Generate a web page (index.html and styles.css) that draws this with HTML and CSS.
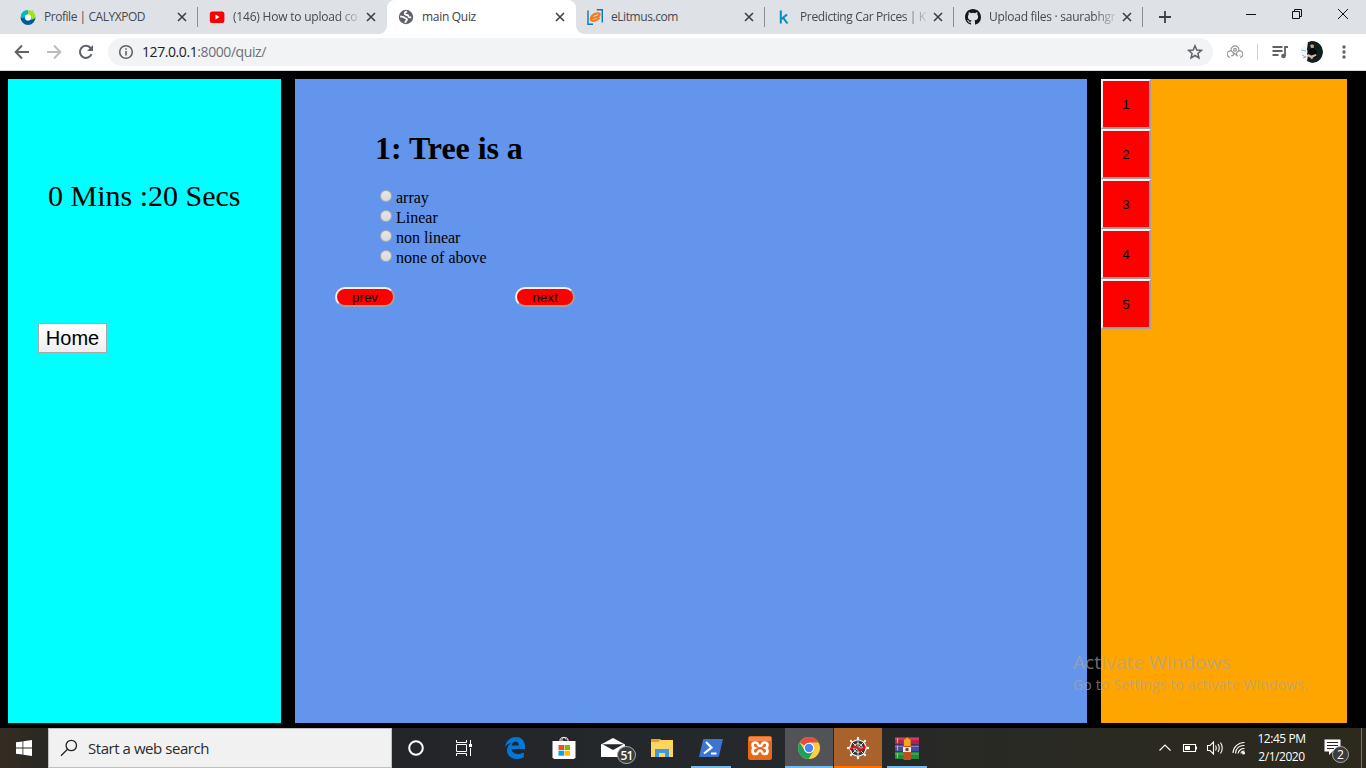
FILE: index.html
```html
<!DOCTYPE html>
<html lang="en">
<head>
<meta charset="utf-8">
<title>main Quiz</title>
<link rel="stylesheet" href="styles.css">
</head>
<body>
<div class="screen">
  <header class="tabstrip">
    <div class="tab">
      <svg class="favicon" viewBox="0 0 16 16"><path d="M1.200 5A7.700 7.700 0 0 1 8 .9v4.600A3 3 0 0 0 5 8.500H.5z" fill="#00b9c8"/><path d="M.5 8.500H5a3 3 0 0 0 6 0h4.500A7.500 7.500 0 0 1 .5 8.500z" fill="#005b9b"/><path d="M8 1.200c1.500-.2 3 0 4.200.8L14 .8l-.6 2.400c1.700 1.500 2.400 3.300 2.100 5.800L11 11A4 4 0 0 0 8 5.500z" fill="#9be51c"/><circle cx="8" cy="8.500" r="3" fill="#fff"/></svg>
      <span class="title t1">Profile | CALYXPOD</span>
      <svg class="close" viewBox="0 0 10 10"><path d="M1 1l8 8M9 1l-8 8"/></svg>
    </div>
    <div class="tab beside-active">
      <svg class="favicon" viewBox="0 0 16 16"><rect x=".8" y="2.500" width="14.600" height="11.500" rx="2.500" fill="#f00"/><path d="M6.500 5.500v5l4-2.500z" fill="#fff"/></svg>
      <span class="title fade t2">(146) How to upload co</span>
      <svg class="close" viewBox="0 0 10 10"><path d="M1 1l8 8M9 1l-8 8"/></svg>
    </div>
    <div class="tab active">
      <svg class="favicon" viewBox="0 0 16 16"><circle cx="8" cy="8" r="7.200" fill="#5f6368"/><path d="M9 2.300C7 3 6.300 4 7 5.200c1 1.300 3 .3 3.500 1.800M2.200 7.500c2 .2 3.500 0 4.300 1.300.8 1 2.500.2 2.500 1.700 0 1.200-1.500 1.200-1.700 3.300M10.500 7c-.3 1 .8 1.500 2.700 1.300" fill="none" stroke="#fff" stroke-width="1.800"/></svg>
      <span class="title t3">main Quiz</span>
      <svg class="close" viewBox="0 0 10 10"><path d="M1 1l8 8M9 1l-8 8"/></svg>
    </div>
    <div class="tab">
      <svg class="favicon" viewBox="0 0 16 16"><path d="M1 1.500v13.700h5M9.800.8h5.500v12.700" fill="none" stroke="#0b76bd" stroke-width="1.400"/><path d="M4.500 8.900C8 9.200 12.500 7.500 12.700 5.600 12.800 3.600 8 4 5.500 6.500 2.500 9.500 3.500 12 6.500 11.800c2.500-.2 4.500-1.300 6-2.800" fill="none" stroke="#f47a20" stroke-width="2.200"/></svg>
      <span class="title t4">eLitmus.com</span>
      <svg class="close" viewBox="0 0 10 10"><path d="M1 1l8 8M9 1l-8 8"/></svg>
    </div>
    <div class="tab">
      <svg class="favicon" viewBox="0 0 16 16"><path d="M4.800 1.500v13M11 5.500 5.500 10M7 8.700l4.500 5.800" fill="none" stroke="#008fc3" stroke-width="2"/></svg>
      <span class="title fade t5">Predicting Car Prices | K</span>
      <svg class="close" viewBox="0 0 10 10"><path d="M1 1l8 8M9 1l-8 8"/></svg>
    </div>
    <div class="tab">
      <svg class="favicon" viewBox="0 0 16 16"><path fill="#191717" d="M8 0C3.580 0 0 3.580 0 8c0 3.540 2.290 6.530 5.470 7.590.4.070.55-.17.55-.38 0-.19-.01-.82-.01-1.490-2.010.37-2.530-.49-2.690-.94-.09-.23-.48-.94-.82-1.130-.28-.15-.68-.52-.01-.53.63-.01 1.080.58 1.230.82.72 1.210 1.870.87 2.330.66.07-.52.28-.87.51-1.070-1.780-.2-3.640-.89-3.640-3.950 0-.87.31-1.590.82-2.150-.08-.2-.36-1.020.08-2.120 0 0 .67-.21 2.200.82a7.600 7.600 0 0 1 4 0c1.530-1.040 2.200-.82 2.200-.82.44 1.100.16 1.920.08 2.120.51.56.82 1.270.82 2.150 0 3.070-1.870 3.750-3.650 3.950.29.25.54.73.54 1.480 0 1.070-.01 1.930-.01 2.200 0 .21.15.46.55.38A8 8 0 0 0 16 8c0-4.420-3.580-8-8-8z"/></svg>
      <span class="title fade t6">Upload files · saurabhgr</span>
      <svg class="close" viewBox="0 0 10 10"><path d="M1 1l8 8M9 1l-8 8"/></svg>
    </div>
    <svg class="newtab" viewBox="0 0 12 12"><path d="M6 0v12M0 6h12"/></svg>
    <div class="window-buttons">
      <svg viewBox="0 0 12 12"><path d="M1 6.500h10"/></svg>
      <svg viewBox="0 0 12 12"><path d="M1.500 3.500h7v7h-7zM3.500 3.500v-2h7v7h-2"/></svg>
      <svg viewBox="0 0 12 12"><path d="M1 1l10 10M11 1 1 11"/></svg>
    </div>
  </header>

  <nav class="toolbar">
    <svg class="nav-icon" viewBox="0 0 16 16"><path d="M15 8H2M8 1.500 1.700 8 8 14.500"/></svg>
    <svg class="nav-icon disabled" viewBox="0 0 16 16"><path d="M1 8h13M8 1.500 14.300 8 8 14.500"/></svg>
    <svg class="nav-icon" viewBox="0 0 16 16"><path d="M13.500 10.200A6 6 0 1 1 12.300 3.700L14 5.400"/><path d="M15 1v6H9z" fill="#5f6368" stroke="none"/></svg>
    <div class="address">
      <svg class="info" viewBox="0 0 16 16"><circle cx="8" cy="8" r="6.300"/><path d="M8 7v4.500M8 4.200v1.600"/></svg>
      <span class="url"><b>127.0.0.1</b>:8000/quiz/</span>
      <svg class="star" viewBox="0 0 16 16"><path d="M8 1.800 9.800 6l4.600.4-3.500 3 1.050 4.500L8 11.500l-3.950 2.400 1.050-4.500-3.500-3L6.200 6z"/></svg>
    </div>
    <svg class="extension" viewBox="0 0 16 16"><path d="M4.300 7.200A3.900 3.900 0 1 1 11.800 6.500M3 13.300A3.200 3.200 0 1 1 6.500 10.500q-.5 1.800-2.500 1M5.500 8l5.500 4.300M13 13.300A3.200 3.200 0 1 0 9.500 10.500M12.500 11.200h.8"/><circle cx="8" cy="5.800" r="1.400"/></svg>
    <span class="rule"></span>
    <svg class="media" viewBox="0 0 16 16"><path d="M.5 3h10M.5 7h10M.5 11h6M13 12V3h3"/><circle cx="11.500" cy="12" r="2.300" fill="#5f6368" stroke="none"/></svg>
    <svg class="avatar" viewBox="0 0 22 22"><circle cx="11" cy="11" r="11" fill="#f2f7fa"/><path d="M7 1C16-3 22 4 22 11S17 22 11 22L6 20l1-6-1-6z" fill="#11201f"/><path d="M0 9l5 1M1 14l4 2M2 17l3-1" stroke="#8db1c9"/><path d="M9 4q2-3 4 0l-.5 4h-2z" fill="#c99e85"/><path d="M8.500 4q2.500-4 5 0l-2.500-.7z" fill="#050505"/><path d="M8 9l2.500-2h2L16 10v6l-7 1-3-4z" fill="#08090c"/><path d="M7 13l3.500 1.500L15 13l.5 1.500-3.500 2-1 2-2-2-2-1z" fill="#dbb8a5"/></svg>
    <svg class="menu" viewBox="0 0 16 16"><circle cx="8" cy="3" r="1.700"/><circle cx="8" cy="8" r="1.700"/><circle cx="8" cy="13" r="1.700"/></svg>
  </nav>

  <main class="quiz">
    <section class="side">
      <div class="timer">0 Mins :20 Secs</div>
      <button class="home">Home</button>
    </section>
    <section class="question">
      <h1>1: Tree is a</h1>
      <ul class="options">
        <li><i class="radio"></i>array</li>
        <li><i class="radio"></i>Linear</li>
        <li><i class="radio"></i>non linear</li>
        <li><i class="radio"></i>none of above</li>
      </ul>
      <div class="pager"><button>prev</button><button>next</button></div>
    </section>
    <section class="numbers">
      <button>1</button><button>2</button><button>3</button><button>4</button><button>5</button>
    </section>
    <div class="watermark"><p class="wm-title">Activate Windows</p><p class="wm-text">Go to Settings to activate Windows.</p></div>
  </main>

  <footer class="taskbar">
    <div class="cell"><svg width="16" height="16" viewBox="0 0 16 16"><path fill="#fff" d="M0 2.300 6.500 1.400v6.200H0zM7.300 1.200 16 0v7.600H7.300zM0 8.400h6.500v6.200L0 13.700zM7.300 8.400H16V16l-8.700-1.200z"/></svg></div>
    <div class="search"><svg width="18" height="18" viewBox="0 0 18 18"><circle cx="11.300" cy="6.500" r="5.200"/><path d="M7.500 10.200 1 16.800"/></svg><span>Start a web search</span></div>
    <div class="cell"><svg width="16" height="16" viewBox="0 0 16 16"><circle cx="8" cy="8" r="6.800" fill="none" stroke="#fff" stroke-width="2"/></svg></div>
    <div class="cell views"><svg width="18" height="16" viewBox="0 0 18 16"><path d="M1.500 0v2.500h10V0M1.500 4.500h10v7h-10zM1.500 16v-2.500h10V16M15.500 0v4M15.500 8v8" fill="none" stroke="#fff"/><rect x="14" y="4" width="3" height="3" fill="#fff"/></svg></div>
    <div class="apps">
      <div class="cell"><svg width="22" height="22" viewBox="0 0 22 22"><path fill="#0078d7" d="M1 10C2 3.500 6.500 0 12 0c6 0 9 4.500 9 9.500V12H7.500c.2 3.500 3.500 5 6.700 5 2.300 0 4.200-.7 5.600-1.500v4.800C18 21.400 15.500 22 13 22 7 22 3 18.500 3 13.500c0-3.500 2-6.300 5-7.700C4.500 6 2.500 8 1 10zM7.600 8.500h7.300C14.900 6 13.500 4.600 11.500 4.600S8 6.500 7.600 8.500z"/></svg></div>
      <div class="cell"><svg width="24" height="24" viewBox="0 0 24 24"><path d="M8 6V4c0-3.500 8-3.500 8 0v2M10 6V3.500C10 1 14 1 14 3.500" fill="none" stroke="#fff"/><path d="M.5 5h23v16.500L22 23H2L.5 21.500z" fill="#fff"/><path fill="#f25022" d="M6.500 9H12v5H6.500z"/><path fill="#7fba00" d="M12.500 9H18v5h-5.500z"/><path fill="#00a4ef" d="M6.500 14.700H12v5H6.500z"/><path fill="#ffb900" d="M12.500 14.700H18v5h-5.500z"/></svg></div>
      <div class="cell mail"><svg width="24" height="20" viewBox="0 0 24 20"><path d="M0 6.500 12 0l12 6.500V19H0z" fill="#fff"/><path d="M1.500 6.300h21L12 12z" fill="#25282b"/></svg><span class="badge">51</span></div>
      <div class="cell"><svg width="22" height="18" viewBox="0 0 22 18"><path d="M0 0h9l1 1h12v17H0z" fill="#ffd45f"/><path d="M0 0h9l-1 3H0z" fill="#e8a21a"/><path d="M4 18v-8h14v8h-4v-4H8v4z" fill="#3b9be0"/></svg></div>
      <div class="cell run"><svg width="24" height="18" viewBox="0 0 24 18"><path d="M4.500 0H23c1 0 1 0 .8 1L20 17c-.2 1-1 1-1 1H1c-1 0-1 0-.8-1L4 1z" fill="#3c74d0"/><path d="M7 3l5.500 5.700L5 14.500M12 14.500h5.500" fill="none" stroke="#fff" stroke-width="2.200"/></svg></div>
      <div class="cell"><svg width="24" height="24" viewBox="0 0 24 24"><rect width="24" height="24" rx="2.500" fill="#e96816"/><path d="M1 1h22v4H1z" fill="#f08b52"/><path d="M7.500 6.500c3.500 0 1.500 3.500 4.500 3.500s1-3.500 4.500-3.500c4 0 3.500 4.500 1.200 5.500 2.300 1 2.800 6-1.200 6-3.500 0-1.500-3.500-4.500-3.500s-1 3.500-4.500 3.500c-4 0-3.500-5-1.200-6C4 11 3.500 6.500 7.500 6.500z" fill="none" stroke="#fff" stroke-width="2.700"/></svg></div>
      <div class="cell current"><svg width="22" height="22" viewBox="0 0 22 22"><circle cx="11" cy="11" r="11" fill="#ffcd40"/><path d="M11 11 1.500 5.500A11 11 0 0 1 20.500 5.500H11z" fill="#dd4f40"/><path d="M1.500 5.500A11 11 0 0 0 10.500 22L15.800 13.500 11 15 6.500 13z" fill="#1ba261"/><circle cx="11" cy="11" r="5.300" fill="#fff"/><circle cx="11" cy="11" r="4.200" fill="#4587f3"/></svg></div>
      <div class="cell alert"><svg width="24" height="24" viewBox="0 0 24 24"><path d="M12 3.500 18 6l2.500 6L18 18l-6 2.500L6 18l-2.500-6L6 6z" fill="#2f3638" stroke="#eee" stroke-width="1.300"/><path d="M12 1v22M1 12h22M4.500 4.500l15 15M19.500 4.500l-15 15" fill="none" stroke="#eee" stroke-width=".9"/><path d="M12 7.500l3.300 1.300 1.300 3.200-1.300 3.300-3.300 1.200-3.300-1.200L7.500 12l1.200-3.200z" fill="none" stroke="#eee" stroke-width=".8"/><path d="M4 13.500 8.500 10.500l3 1 3 3.300 5-4.300" fill="none" stroke="#f00" stroke-width="2"/><g fill="#eee"><circle cx="12" cy="2" r="1.200"/><circle cx="12" cy="22" r="1.200"/><circle cx="2" cy="12" r="1.200"/><circle cx="22" cy="12" r="1.200"/><circle cx="5" cy="5" r="1.200"/><circle cx="19" cy="5" r="1.200"/><circle cx="5" cy="19" r="1.200"/><circle cx="19" cy="19" r="1.200"/></g></svg></div>
      <div class="cell run"><svg width="24" height="24" viewBox="0 0 24 24"><path d="M0 1h24v7H0z" fill="#bd1f48"/><path d="M0 8.500h24v7H0z" fill="#4d47a5"/><path d="M0 16h24v7H0z" fill="#228b35"/><path d="M0 3h24M0 10.500h24M0 18h24" stroke="#fff" stroke-opacity=".3"/><path d="M2.500 2v20" stroke="#d6b52e" stroke-width="1.200" stroke-dasharray="5 2.500"/><path d="M8.500 4 12 1l4 3v20H8.500z" fill="#b8541b"/><path d="M9 4l3.200-2.500L15.500 4v6H9z" fill="#f5a51b"/><path d="M8 11h8v5H8z" fill="#eee"/><path d="M10.500 12h3v3h-3z" fill="#774324"/></svg></div>
    </div>
    <div class="tray">
      <svg width="14" height="16" viewBox="0 0 14 16"><path d="M1.500 10.500 7 5l5.500 5.500"/></svg>
      <svg width="16" height="16" viewBox="0 0 16 16"><path d="M1.500 4.500h12v7h-12zM14.500 6.500v3"/><path d="M3 6h5v4H3z" fill="#fff" stroke="none"/></svg>
      <svg width="18" height="16" viewBox="0 0 18 16"><path d="M1.500 5.500H4L7.500 2v12L4 10.500H1.500zM9.500 5.500q1.500 2.500 0 5M12 4q2.500 4 0 8M14.500 2.500q3.500 5.500 0 11"/></svg>
      <svg width="14" height="16" viewBox="0 0 14 16"><path d="M1 13A11 11 0 0 1 12.500 2.500M3.500 13.500A8 8 0 0 1 12.500 5.500M6 13.500A6 6 0 0 1 12.500 8.500M9 13.500q0-2.500 3.500-2.500"/><circle cx="11.500" cy="13" r="1.500" fill="#fff" stroke="none"/></svg>
      <div class="clock"><span class="time">12:45 PM</span><span class="date">2/1/2020</span></div>
      <div class="notices"><svg width="17" height="16" viewBox="0 0 17 16"><path d="M.5.500h16v12h-8L5 16v-3.500H.500z" fill="#fff" stroke="none"/><path d="M3 3.500h11M3 6.500h11M3 9.500h7" stroke="#2c281d"/></svg><span class="badge">2</span></div>
      <span class="desktop-edge"></span>
    </div>
  </footer>
</div>
</body>
</html>
```

FILE: styles.css
```css
* { box-sizing: border-box; }
body { margin: 0; font-family: "Open Sans", "Noto Sans", sans-serif; }
svg { display: block; flex: none; }
.screen { width: 1366px; height: 768px; display: flex; flex-direction: column; overflow: hidden; background: #000; }

/* Browser tabs */
.tabstrip { height: 34px; flex: none; display: flex; align-items: center; padding-left: 9px; background: #dee1e6; }
.tab { width: 189px; height: 34px; flex: none; display: flex; align-items: center; padding: 0 10px 0 11px; position: relative; }
.tab::after { content: ""; position: absolute; right: 0; top: 7px; width: 1px; height: 20px; background: #8b8e93; }
.tab.active::after, .tab.beside-active::after { display: none; }
.tab.active { background: #fff; border-radius: 8px 8px 0 0; }
.tab.active::before { content: ""; position: absolute; left: -8px; right: -8px; bottom: 0; height: 8px; background: radial-gradient(circle at 0 0, transparent 7.500px, #fff 8px) left / 8px 8px no-repeat, radial-gradient(circle at 100% 0, transparent 7.500px, #fff 8px) right / 8px 8px no-repeat; }
.favicon { width: 16px; height: 16px; margin-right: 8px; }
.title { width: 128px; font-size: 12px; line-height: 18px; white-space: nowrap; color: #45494e; }
.active .title { color: #3c4043; }
.title.fade { mask-image: linear-gradient(90deg, #000 104px, transparent 130px); }
.t1 { letter-spacing: -.46px; }
.t2 { letter-spacing: -.21px; }
.t3 { letter-spacing: -.3px; }
.t4 { letter-spacing: -.44px; }
.t5 { letter-spacing: -.37px; }
.t6 { letter-spacing: -.27px; }
.close { width: 10px; height: 10px; margin-left: 5px; fill: none; stroke: #3c4043; stroke-width: 1.600; }
.newtab { width: 12px; height: 12px; margin-left: 16px; stroke: #3c4043; stroke-width: 1.800; }
.window-buttons { margin-left: auto; display: flex; gap: 34px; padding: 0 17px 6px 0; }
.window-buttons svg { width: 12px; height: 12px; fill: none; stroke: #111; }

/* Address bar */
.toolbar { height: 37px; flex: none; display: flex; align-items: center; padding: 0 13px 0 14px; background: #fff; border-bottom: 1px solid #d5d8dc; }
.nav-icon { width: 16px; height: 16px; margin-right: 16px; fill: none; stroke: #5f6368; stroke-width: 2; }
.nav-icon.disabled { stroke: #babcbe; }
.address { width: 1105px; height: 28px; flex: none; margin-left: -2px; display: flex; align-items: center; padding: 0 10px; border-radius: 14px; background: #f1f3f4; }
.info { width: 16px; height: 16px; margin-right: 8px; fill: none; stroke: #5f6368; stroke-width: 1.600; }
.url { font-size: 14px; letter-spacing: -.42px; padding-bottom: 2px; color: #6d7175; }
.url b { font-weight: 400; color: #202124; }
.star { width: 16px; height: 16px; margin-left: auto; fill: none; stroke: #5f6368; stroke-width: 1.500; }
.extension { width: 16px; height: 16px; margin-left: 14px; fill: none; stroke: #929497; stroke-width: 1.200; }
.rule { width: 1px; height: 16px; flex: none; margin: 0 14px; background: #cfd2d5; }
.media { width: 16px; height: 16px; fill: none; stroke: #5f6368; stroke-width: 1.800; }
.avatar { width: 22px; height: 22px; margin: 0 13px; border-radius: 50%; }
.menu { width: 16px; height: 16px; fill: #5f6368; }

/* Quiz page */
.quiz { height: 657px; flex: none; position: relative; display: grid; grid-template-columns: 273px 792px 246px; column-gap: 14px; padding: 8px 8px 5px; background: #000; }
.side { padding: 100px 30px; background: #0ff; }
.timer { padding-left: 10px; font: 30px/34px "Liberation Serif", serif; white-space: nowrap; }
.home { display: block; width: 69px; height: 30px; margin-top: 110px; padding: 0; border: 1px solid #a9a9a9; background: linear-gradient(#fff, #eee); font: 20px/26px "Liberation Sans", sans-serif; color: #000; }
.question { padding: 50px 40px; background: #6495ed; font-family: "Liberation Serif", serif; }
.question h1 { margin: 0 0 20px 40px; font-size: 32px; line-height: 38px; letter-spacing: -.05px; }
.options { list-style: none; margin: 0 0 19px 45px; padding: 0; font-size: 16px; line-height: 20px; }
.options li { height: 20px; display: flex; gap: 4px; padding-top: 1px; }
.radio { width: 12px; height: 12px; flex: none; margin: 2px 0 0; border: 1px solid #aaa; border-radius: 50%; background: linear-gradient(#e5e5e5, #dadada); }
.pager { display: flex; gap: 120px; padding-top: 1px; }
.pager button { width: 60px; height: 20px; padding: 1px 0 0; border: 2px solid; border-color: #f0f0f0 #a0a0a0 #a0a0a0 #f0f0f0; border-radius: 15px; background: red; font: 13.333px/15px "Liberation Sans", sans-serif; color: #000; }
.numbers { display: flex; flex-direction: column; background: orange; }
.numbers button { width: 50px; height: 50px; flex: none; padding: 0; border: 2px solid; border-color: #f0f0f0 #a0a0a0 #a0a0a0 #f0f0f0; background: red; font: 13.333px "Liberation Sans", sans-serif; color: #000; }
.watermark { position: absolute; left: 1073px; top: 578px; color: rgba(165, 165, 165, .68); white-space: nowrap; }
.watermark p { margin: 0; }
.wm-title { font-size: 19px; line-height: 26px; letter-spacing: .1px; }
.wm-text { font-size: 14px; line-height: 19px; letter-spacing: .15px; }

/* Taskbar */
.taskbar { height: 40px; flex: none; display: flex; background: linear-gradient(90deg, #332c22 0, #292823 48px, #242529 390px, #25292c 780px, #292925 960px, #2d291d 1366px); }
.cell { width: 48px; height: 40px; flex: none; display: flex; align-items: center; justify-content: center; position: relative; }
.search { width: 344px; display: flex; align-items: center; gap: 10px; padding-left: 11px; border: 1px solid #bfbfbf; background: #f1f1f1; color: #2b2b2b; font-size: 15px; letter-spacing: -.45px; }
.search svg { fill: none; stroke: #222; stroke-width: 1.300; }
.apps { display: flex; gap: 1px; margin-left: 3px; }
.run::after, .current::after, .alert::after { content: ""; position: absolute; left: 4px; right: 4px; bottom: 0; height: 2px; background: #76b9ed; }
.current { background: #515356; }
.current::after { left: 0; right: 0; }
.alert { background: #a9622c; }
.alert::after { left: 0; right: 0; background: #ff7200; }
.badge { position: absolute; display: flex; align-items: center; justify-content: center; border: 1px solid #aaa; border-radius: 50%; background: #3b3c3c; color: #fff; }
.mail .badge { left: 28px; top: 18px; width: 19px; height: 18px; font-size: 12px; font-weight: 600; letter-spacing: -.8px; }
.tray { margin-left: auto; display: flex; align-items: center; color: #fff; }
.tray svg { margin-right: 8px; fill: none; stroke: #fff; stroke-width: 1.100; }
.tray svg:first-child { margin-right: 10px; }
.clock { width: 49px; margin-left: 3px; display: flex; flex-direction: column; align-items: center; padding-bottom: 1px; font-size: 12px; line-height: 18px; letter-spacing: -.45px; white-space: nowrap; }
.notices { width: 25px; height: 24px; margin-left: 18px; position: relative; }
.notices svg { margin: 3px 0 0; }
.notices .badge { left: 8px; top: 10px; width: 17px; height: 17px; font-size: 12px; }
.desktop-edge { width: 1px; height: 40px; margin: 0 4px 0 12px; background: #77756d; }
```
